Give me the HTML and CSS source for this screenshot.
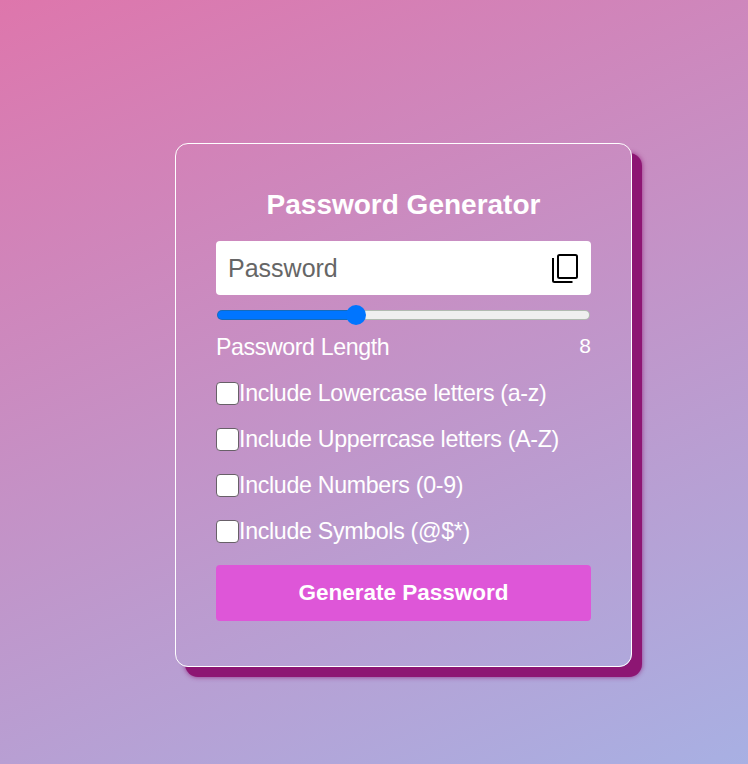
FILE: index.html
```html
<!DOCTYPE html>
<html lang="en">
<head>
<meta charset="utf-8">
<title>Password Generator</title>
<link rel="stylesheet" href="styles.css">
</head>
<body>
<main class="card">
  <h1 class="title">Password Generator</h1>
  <div class="field">
    <input class="password" type="text" placeholder="Password" readonly>
    <svg class="copy" viewBox="0 0 28 30" fill="none" stroke="#000" stroke-width="2">
      <rect x="7" y="2" width="19" height="23" rx="1.5"/>
      <path d="M2 5V27.5Q2 29 3.5 29H21.5"/>
    </svg>
  </div>
  <input class="slider" type="range" min="1" max="20" value="8">
  <div class="row length"><span>Password Length</span><span class="count">8</span></div>
  <label class="row"><input class="check" type="checkbox"><span>Include Lowercase letters (a-z)</span></label>
  <label class="row"><input class="check" type="checkbox"><span>Include Upperrcase letters (A-Z)</span></label>
  <label class="row"><input class="check" type="checkbox"><span>Include Numbers (0-9)</span></label>
  <label class="row"><input class="check" type="checkbox"><span>Include Symbols (@$*)</span></label>
  <button class="generate" type="button">Generate Password</button>
</main>
</body>
</html>
```
FILE: styles.css
```css
* { box-sizing: border-box; }
body {
  margin: 0;
  height: 764px;
  padding: 143px 0 0 175px;
  overflow: hidden;
  font-family: "Liberation Sans", Arial, sans-serif;
  color: #fff;
  background: linear-gradient(157deg, #de76ac, #a8b0e3);
}
.card {
  width: 457px;
  height: 524px;
  padding: 40px;
  display: flex;
  flex-direction: column;
  border: 1px solid #fff;
  border-radius: 13px;
  box-shadow: 10px 10px 0 #8d1673, 10px 10px 5px rgba(140, 20, 115, .8);
}
.title {
  margin: 4px 0 19px;
  font-size: 28px;
  line-height: 34px;
  text-align: center;
}
.field {
  display: flex;
  align-items: center;
  height: 54px;
  padding: 0 12px;
  border-radius: 4px;
  background: #fff;
}
.password {
  flex: 1;
  min-width: 0;
  padding: 0;
  border: 0;
  outline: 0;
  background: none;
  font: 25px "Liberation Sans", Arial, sans-serif;
}
.password::placeholder { color: #666; }
.copy { width: 28px; height: 30px; }
.slider {
  appearance: none;
  width: 373px;
  height: 10px;
  margin: 15px 1px 7px;
  border: 1px solid rgba(60, 90, 60, .35);
  border-radius: 5px;
  background: linear-gradient(90deg, #0075ff 37%, #efefef 37%) border-box;
}
.slider::-webkit-slider-thumb {
  appearance: none;
  width: 20px;
  height: 20px;
  border-radius: 50%;
  background: #0075ff;
  transform: translateX(-1px);
}
.row {
  display: flex;
  align-items: center;
  height: 46px;
  font-size: 23.2px;
  letter-spacing: -.31px;
}
.length {
  justify-content: space-between;
  height: 43px;
  padding-bottom: 2px;
  letter-spacing: -.4px;
}
.count { margin-bottom: 4px; font-size: 21px; letter-spacing: 0; }
.check {
  appearance: none;
  flex: none;
  width: 23px;
  height: 23px;
  margin: 1px 0 0;
  border: 1px solid #686068;
  border-radius: 4px;
  background: #fff;
}
.generate {
  height: 56px;
  margin-top: 11px;
  padding: 0 0 1px;
  border: 0;
  border-radius: 4px;
  background: #de56d8;
  color: #fff;
  font: bold 22.5px "Liberation Sans", Arial, sans-serif;
}
```
